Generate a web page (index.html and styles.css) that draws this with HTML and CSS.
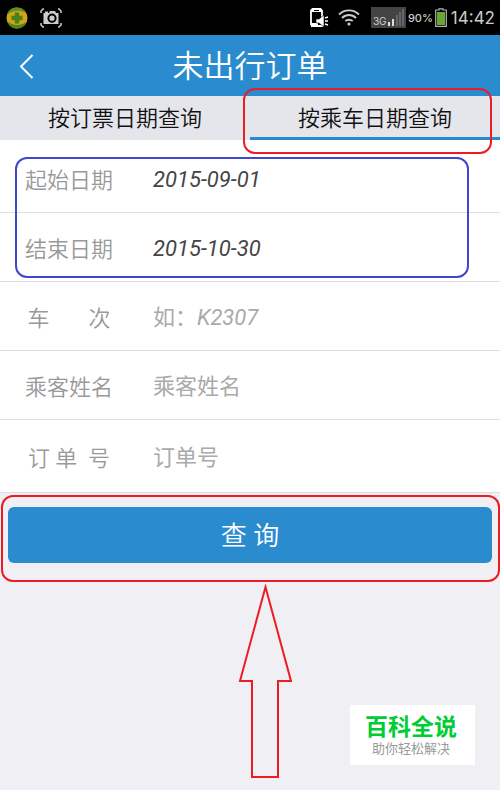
FILE: index.html
```html
<!DOCTYPE html>
<html lang="zh-CN">
<head>
    <meta charset="UTF-8">
    <meta name="viewport" content="width=device-width, initial-scale=1.0">
    <title>未出行订单</title>
    <link rel="stylesheet" href="styles.css">
</head>
<body>
    <div class="statusbar">
        <svg class="icon-guard" width="22" height="22" viewBox="0 0 22 22">
            <circle cx="11" cy="11" r="10.500" fill="#d3a416"/>
            <path d="M1 8C2 3 6 0.500 11 0.500c5 0 8 3 9.500 6C15 2.500 7 3 1 8z" fill="#5c8f28"/>
            <path d="M1 14c2 5 6 7.500 10 7.500 5 0 8.500-3 9.800-7C16 19 7 19.500 1 14z" fill="#4c8420"/>
            <path d="M8.800 5.500h4.400v3.300h3.300v4.400h-3.300v3.300H8.800v-3.300H5.500V8.800h3.300z" fill="#4a801c"/>
        </svg>
        <svg class="icon-camera" width="22" height="20" viewBox="0 0 22 20" fill="none" stroke="#ccc" stroke-width="1.500">
            <path d="M1 5V3l2-2h1M18 1h1l2 2v2M21 15v2l-2 2h-1M4 19H3l-2-2v-2"/>
            <path d="M3.500 5H5V3.500h3V5h1l1-2h5l1 2h2.500v11h-15z" fill="#ccc" stroke="none"/>
            <circle cx="12" cy="10.200" r="3.600" fill="#ccc" stroke="#000" stroke-width="2"/>
        </svg>
        <span class="spacer"></span>
        <svg class="icon-phone" width="19" height="20" viewBox="0 0 19 20">
            <path d="M2.500 1h8L12 2.500V18H2.500L1 16.500V2.500z" fill="none" stroke="#fff" stroke-width="1.800"/>
            <path d="M1 1h11v3H1zM1 15h7v4H1z" fill="#fff"/>
            <path d="M4 2h5v1H4z" fill="#000"/>
            <path d="M6 11h3l5-4v12l-5-4H6z" fill="#fff" stroke="#000" stroke-width="0.600"/>
            <path d="M15 10l3-1M15 13h3M15 16l3 1" stroke="#fff" stroke-width="1.400"/>
        </svg>
        <svg class="icon-wifi" width="22" height="17" viewBox="0 0 22 17" fill="none" stroke="#ccc" stroke-width="1.900">
            <path d="M1 5.500C6.500 0 15.500 0 21 5.500M4 9c4-4 10-4 14 0M7.300 12.200c2-2 5.400-2 7.400 0"/>
            <circle cx="11" cy="15" r="1.600" fill="#ccc" stroke="none"/>
        </svg>
        <div class="network">
            <span>3G</span>
            <svg width="17" height="17" viewBox="0 0 17 17">
                <path d="M1 13h2v4H1zM5 10h2v7H5z" fill="#ddd"/>
                <path d="M9 6h2v11H9zM12 3h2v14h-2zM15 0h2v17h-2z" fill="#666"/>
            </svg>
        </div>
        <span class="percent">90%</span>
        <svg class="icon-battery" width="12" height="19" viewBox="0 0 12 19">
            <path d="M4 2V0.800h4V2h3.300v16.300H0.700V2z" fill="#000" stroke="#b5b5b5" stroke-width="1.200"/>
            <path d="M2 4h8v13H2z" fill="#6aa636"/>
        </svg>
        <time class="clock">14:42</time>
    </div>

    <header class="titlebar">
        <button class="back" type="button" aria-label="返回">
            <svg width="16" height="26" viewBox="0 0 16 26" fill="none" stroke="#fff" stroke-width="2">
                <path d="M14.500 2L3 13.500 14.500 25"/>
            </svg>
        </button>
        <h1>未出行订单</h1>
    </header>

    <nav class="tabs">
        <button class="tab" type="button">按订票日期查询</button>
        <button class="tab active" type="button">按乘车日期查询<span class="mark mark-tab"></span></button>
    </nav>

    <form>
        <div class="fields">
            <div class="dates">
                <div class="row first">
                    <label for="startDate">起始日期</label>
                    <input id="startDate" type="text" value="2015-09-01">
                </div>
                <div class="row">
                    <label for="endDate">结束日期</label>
                    <input id="endDate" type="text" value="2015-10-30">
                </div>
                <span class="mark mark-dates"></span>
            </div>
            <div class="row">
                <label for="train">车&emsp;&ensp;&nbsp;次</label>
                <input id="train" type="text" placeholder="如：K2307">
            </div>
            <div class="row">
                <label for="passenger">乘客姓名</label>
                <input id="passenger" type="text" placeholder="乘客姓名">
            </div>
            <div class="row last">
                <label for="orderNo">订 单&nbsp; 号</label>
                <input id="orderNo" type="text" placeholder="订单号">
            </div>
        </div>

        <div class="actions">
            <button class="search" type="submit">查 询</button>
            <span class="mark mark-search"></span>
        </div>
    </form>

    <div class="pointer">
        <svg width="54" height="196" viewBox="0 0 54 196" fill="none" stroke="#ed1c24" stroke-width="2">
            <path d="M27.500 3L53 97H40v96H14V97H2z"/>
        </svg>
    </div>

    <aside class="watermark">
        <strong>百科全说</strong>
        <span>助你轻松解决</span>
    </aside>
</body>
</html>
```
FILE: styles.css
```css
* {
    box-sizing: border-box;
}

body {
    margin: 0;
    min-height: 100vh;
    background-color: #efeff4;
    font-family: Roboto, "Noto Sans CJK SC", sans-serif;
    font-size: 22px;
    font-synthesis: none;
}

button, input {
    border: 0;
    padding: 0;
    background: none;
    font: inherit;
}

/* Phone status bar */
.statusbar {
    display: flex;
    align-items: center;
    height: 35px;
    padding: 0 5px 0 6px;
    background-color: #000;
    color: #ccc;
}

.icon-camera {
    margin-left: 12px;
}

.spacer {
    flex: 1;
}

.icon-wifi {
    margin-left: 9px;
}

.network {
    display: flex;
    align-items: flex-end;
    justify-content: space-between;
    width: 35px;
    height: 21px;
    margin-left: 11px;
    padding: 2px;
    background-color: #444;
    font: 10px/10px Inter, sans-serif;
}

.percent {
    margin-left: 2px;
    font: 500 11px/20px Inter, sans-serif;
}

.icon-battery {
    margin-left: 2px;
}

.clock {
    margin-left: 4px;
    font-size: 17px;
    font-family: Inter, sans-serif;
}

/* Title */
.titlebar {
    display: flex;
    align-items: center;
    justify-content: center;
    position: relative;
    height: 61px;
    background-color: #2a8ccf;
    color: #fff;
}

.titlebar h1 {
    margin: 0;
    padding-bottom: 4px;
    font-size: 31px;
    font-weight: 350;
}

.back {
    position: absolute;
    left: 18px;
    color: #fff;
}

.back svg {
    display: block;
}

.tabs {
    display: flex;
    height: 44px;
    background-color: #e5e6eb;
}

.tab {
    flex: 1;
    padding-bottom: 2px;
    border-bottom: 3px solid transparent;
    color: #111;
    font-weight: 350;
}

.tab.active {
    position: relative;
    border-bottom-color: #2a8ccf;
}

/* Form */
.fields {
    background-color: #fff;
}

.dates {
    position: relative;
}

.row {
    display: flex;
    align-items: center;
    height: 69px;
    padding: 0 24px;
    border-bottom: 1px solid #ddd;
}

.row.first {
    height: 73px;
    padding-top: 4px;
}

.row.last {
    height: 73px;
}

.row label {
    width: 90px;
    margin-right: 39px;
    color: #999;
    font-weight: 350;
    text-align: center;
}

.row input {
    flex: 1;
    min-width: 0;
    padding-top: 2px;
    color: #444;
    font-style: italic;
}

.row input::placeholder {
    color: #aaa;
    opacity: 1;
}

.actions {
    position: relative;
    padding: 14px 8px 19px;
}

.search {
    display: block;
    width: 100%;
    height: 56px;
    padding-bottom: 3px;
    border-radius: 6px;
    background-color: #2a8ccf;
    color: #fff;
    font-size: 26px;
    font-weight: 350;
}

/* Hand drawn marks over the screen */
.mark {
    position: absolute;
    border: 2px solid #ed1c24;
    border-radius: 12px;
    pointer-events: none;
}

.mark-tab {
    z-index: 1;
    top: -8px;
    right: 8px;
    bottom: -17px;
    left: -7px;
}

.mark-dates {
    top: 17px;
    right: 31px;
    bottom: 4px;
    left: 15px;
    border-color: #3f48cc;
}

.mark-search {
    top: 2px;
    right: 0;
    bottom: 0;
    left: 1px;
}

.pointer {
    padding: 2px 0 0 30px;
}

.pointer svg {
    display: block;
    margin: 0 auto;
}

.watermark {
    position: fixed;
    right: 25px;
    bottom: 25px;
    display: flex;
    flex-direction: column;
    align-items: center;
    justify-content: center;
    width: 125px;
    height: 60px;
    padding: 6px 3px 0 0;
    background-color: #fff;
}

.watermark strong {
    color: #00cc33;
    font-size: 23px;
    line-height: 22px;
}

.watermark span {
    color: #999;
    font-size: 13px;
    line-height: 20px;
}
```
